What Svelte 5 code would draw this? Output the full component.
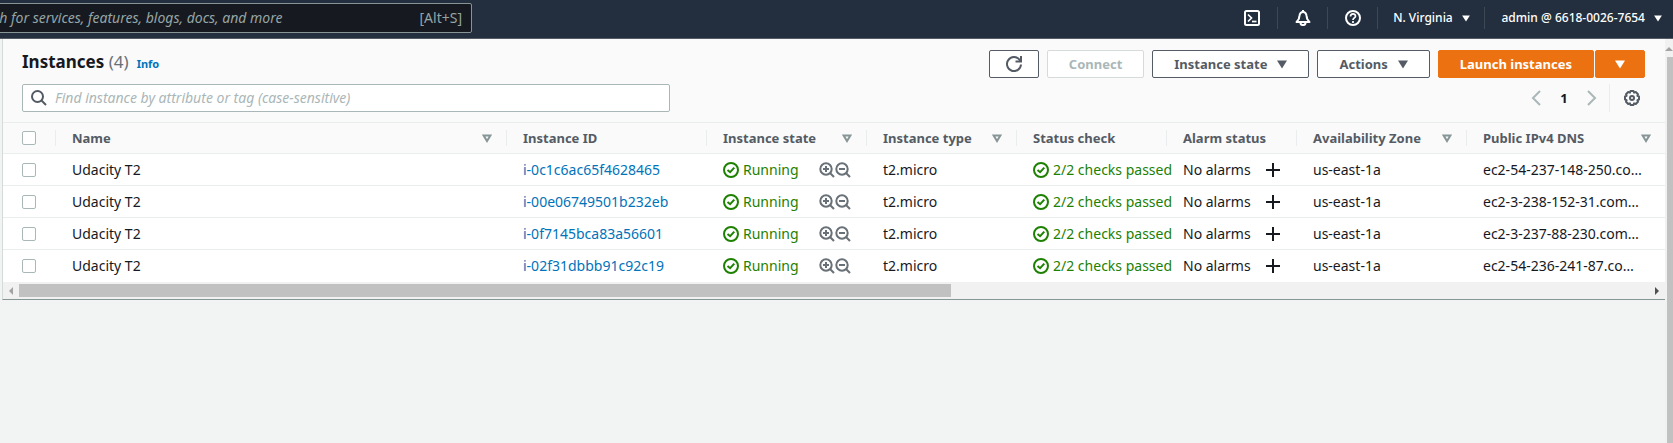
<script>
  const columns = [
    { key: 'name', label: 'Name', filter: true },
    { key: 'id', label: 'Instance ID', filter: false },
    { key: 'state', label: 'Instance state', filter: true },
    { key: 'type', label: 'Instance type', filter: true },
    { key: 'check', label: 'Status check', filter: false },
    { key: 'alarm', label: 'Alarm status', filter: false },
    { key: 'zone', label: 'Availability Zone', filter: true },
    { key: 'dns', label: 'Public IPv4 DNS', filter: true }
  ];

  const instances = [
    { id: 'i-0c1c6ac65f4628465', dns: 'ec2-54-237-148-250.co…' },
    { id: 'i-00e06749501b232eb', dns: 'ec2-3-238-152-31.com…' },
    { id: 'i-0f7145bca83a56601', dns: 'ec2-3-237-88-230.com…' },
    { id: 'i-02f31dbbb91c92c19', dns: 'ec2-54-236-241-87.co…' }
  ];
</script>

{#snippet caret()}
  <svg class="caret" viewBox="0 0 10 9" aria-hidden="true"><path d="M0 .5h10L5 8.5z" fill="currentColor" /></svg>
{/snippet}

{#snippet okIcon()}
  <svg class="ok" viewBox="0 0 16 16" fill="none" stroke="currentColor" stroke-width="2" aria-hidden="true">
    <circle cx="8" cy="8" r="7" />
    <path d="M4.5 8l2.6 2.2L11.3 5.6" />
  </svg>
{/snippet}

{#snippet lens(plus)}
  <svg viewBox="0 0 16 16" fill="none" stroke="currentColor" stroke-width="2" aria-hidden="true">
    <circle cx="7" cy="7" r="5.7" />
    <path d="M11 11l4 4M4 7h6" />
    {#if plus}<path d="M7 4v6" />{/if}
  </svg>
{/snippet}

<div class="page">
  <header class="topbar">
    <div class="global-search">
      <input type="text" aria-label="Search" placeholder="ch for services, features, blogs, docs, and more" />
      <kbd>[Alt+S]</kbd>
    </div>
    <nav>
      <button class="nav-icon" aria-label="CloudShell">
        <svg viewBox="0 0 16 16" fill="none" stroke="currentColor" stroke-width="2">
          <rect x="1" y="1" width="14" height="14" rx="1.5" />
          <path d="M4 4.5L7.5 8 4 11.5" stroke-width="1.7" /><path d="M8 11.5h4.5" stroke-width="1.7" />
        </svg>
      </button>
      <button class="nav-icon" aria-label="Notifications">
        <svg viewBox="0 0 16 16" fill="none" stroke="currentColor" stroke-width="2" stroke-linejoin="round">
          <path d="M8 2C5.500 2 4.700 4 4.400 6L3.800 9 1.500 12h13l-2.300-3-.6-3C11.300 4 10.500 2 8 2z" />
          <path d="M8 0v2M5.500 12.500c0 3.400 5 3.400 5 0" />
        </svg>
      </button>
      <button class="nav-icon" aria-label="Help">
        <svg viewBox="0 0 16 16" fill="none" stroke="currentColor" stroke-width="2">
          <circle cx="8" cy="8" r="7" />
          <path d="M5.500 6.500C5.500 3 10.600 3.200 10.500 6.200 10.400 8 8 7.800 8 10M8 11v2" stroke-width="1.700" />
        </svg>
      </button>
      <button class="nav-text region">N. Virginia {@render caret()}</button>
      <button class="nav-text account">admin @ 6618-0026-7654 {@render caret()}</button>
    </nav>
  </header>

  <div class="body">
    <main>
      <section class="panel">
        <div class="panel-head">
          <div class="title-row">
            <h1>Instances <span>(4)</span></h1>
            <a class="info" href="#info">Info</a>
            <div class="actions">
              <button class="btn icon-only" aria-label="Refresh">
                <svg viewBox="0 0 16 16" fill="none" stroke="currentColor" stroke-width="2">
                  <path d="M15 8.500A7 7 0 1 1 13.400 3.600L14.500 5" /><path d="M15 0v5.500H9.500" />
                </svg>
              </button>
              <button class="btn" disabled>Connect</button>
              <button class="btn">Instance state {@render caret()}</button>
              <button class="btn">Actions {@render caret()}</button>
              <div class="split">
                <button class="btn primary">Launch instances</button>
                <button class="btn primary icon-only" aria-label="More launch options">{@render caret()}</button>
              </div>
            </div>
          </div>
          <div class="filter-row">
            <label class="filter">
              <svg viewBox="0 0 16 16" fill="none" stroke="currentColor" stroke-width="2" aria-hidden="true">
                <circle cx="6.500" cy="6.500" r="5.500" /><path d="M10.500 10.500l4.500 4.500" />
              </svg>
              <input type="text" aria-label="Find instance" placeholder="Find instance by attribute or tag (case-sensitive)" />
            </label>
            <div class="pager">
              <button aria-label="Previous page"><svg viewBox="0 0 16 16" fill="none" stroke="currentColor" stroke-width="2"><path d="M12 1L5 8l7 7" /></svg></button>
              <button class="current">1</button>
              <button aria-label="Next page"><svg viewBox="0 0 16 16" fill="none" stroke="currentColor" stroke-width="2"><path d="M4 1l7 7-7 7" /></svg></button>
              <button class="settings" aria-label="Preferences">
                <svg viewBox="0 0 16 16" fill="none" stroke="currentColor" stroke-width="2">
                  <path d="M6.500 1h3l.6 1.600L11.800 2l2.200 2.200-.6 1.700 1.600.6v3l-1.600.6.6 1.700-2.200 2.200-1.700-.6L9.500 15h-3l-.6-1.600-1.700.6L2 11.800l.6-1.700L1 9.500v-3l1.600-.6L2 4.200 4.200 2l1.700.6z" stroke-linejoin="round" />
                  <circle cx="8" cy="8" r="2" />
                </svg>
              </button>
            </div>
          </div>
        </div>

        <table>
          <colgroup>
            <col class="c-select" />
            {#each columns as c}<col class="c-{c.key}" />{/each}
          </colgroup>
          <thead>
            <tr>
              <th class="select"><input type="checkbox" aria-label="Select all instances" /></th>
              {#each columns as c}
                <th scope="col">
                  <div class="th">
                    <span>{c.label}</span>
                    {#if c.filter}
                      <svg class="sort" viewBox="0 0 10 9" fill="none" stroke="currentColor" stroke-width="2" aria-hidden="true"><path d="M1.600 1.500h6.800L5 7z" /></svg>
                    {/if}
                  </div>
                </th>
              {/each}
            </tr>
          </thead>
          <tbody>
            {#each instances as row}
              <tr>
                <td class="select"><input type="checkbox" aria-label="Select {row.id}" /></td>
                <td>Udacity T2</td>
                <td><a href="#{row.id}">{row.id}</a></td>
                <td>
                  <div class="cell">
                    {@render okIcon()}<span>Running</span>
                    <span class="lenses">
                      <button aria-label="Filter in">{@render lens(true)}</button>
                      <button aria-label="Filter out">{@render lens(false)}</button>
                    </span>
                  </div>
                </td>
                <td>t2.micro</td>
                <td><div class="cell">{@render okIcon()}<span>2/2 checks passed</span></div></td>
                <td>
                  <div class="cell alarm">
                    <span>No alarms</span>
                    <button aria-label="Add alarm">
                      <svg viewBox="0 0 16 16" fill="none" stroke="currentColor" stroke-width="2"><path d="M8 1v14M1 8h14" /></svg>
                    </button>
                  </div>
                </td>
                <td>us-east-1a</td>
                <td>{row.dns}</td>
              </tr>
            {/each}
          </tbody>
        </table>

        <div class="hscroll" aria-hidden="true">
          <svg viewBox="0 0 4 8"><path d="M4 0v8L0 4z" fill="#a3a3a3" /></svg>
          <div class="track"><div class="thumb"></div></div>
          <svg viewBox="0 0 4 8"><path d="M0 0v8l4-4z" fill="#505050" /></svg>
        </div>
      </section>
    </main>
    <div class="vscroll" aria-hidden="true">
      <svg viewBox="0 0 8 4"><path d="M0 4h8L4 0z" fill="#a3a3a3" /></svg>
      <div class="vthumb"></div>
    </div>
  </div>
</div>

<style>
  :global(body) { margin: 0; }
  .page {
    min-height: 100vh;
    display: flex;
    flex-direction: column;
    overflow: hidden;
    background: #f2f3f3;
    color: #16191f;
    font: 14px/20px "Noto Sans", "Open Sans", sans-serif;
  }
  * { box-sizing: border-box; }
  button, input { font: inherit; color: inherit; }
  button { margin: 0; padding: 0; border: 0; background: none; white-space: nowrap; }
  svg { display: block; flex: none; width: 16px; height: 16px; }
  svg.caret { width: 10px; height: 9px; }
  a { color: #0073bb; text-decoration: none; }

  .topbar {
    height: 39px;
    display: flex;
    align-items: center;
    justify-content: space-between;
    padding-bottom: 2px;
    background: #232f3e;
    border-bottom: 1px solid #545b64;
    color: #fff;
  }
  .global-search {
    width: 480px;
    height: 30px;
    margin-left: -8px;
    display: flex;
    align-items: center;
    padding-right: 9px;
    background: #16191f;
    border: 1px solid #879596;
    border-radius: 2px;
    color: #95a5a6;
  }
  .global-search input {
    flex: 1;
    min-width: 0;
    padding: 0;
    border: 0;
    background: none;
  }
  input::placeholder { color: #95a5a6; font-style: italic; opacity: 1; }
  kbd { font: inherit; }
  nav { display: flex; align-items: center; }
  nav button { height: 22px; display: flex; align-items: center; justify-content: center; }
  nav button + button { border-left: 1px solid #3d4855; }
  .nav-icon { width: 50px; }
  .nav-text { gap: 9px; font-size: 12px; font-weight: 500; }
  .region { width: 107px; }
  .account { padding: 0 11px 0 16px; }
  .nav-text svg.caret { width: 8px; height: 7px; }

  .body { flex: 1; display: flex; align-items: stretch; }
  main { flex: 1; min-width: 0; padding-left: 2px; }
  .panel { border-left: 1px solid #d5dbdb; border-bottom: 1px solid #879596; background: #fff; }
  .panel-head { padding: 11px 20px 10px 19px; background: #fafafa; border-bottom: 1px solid #eaeded; }
  .title-row { display: flex; align-items: center; margin-bottom: 6px; }
  h1 { margin: 0; font-size: 17px; line-height: 22px; font-weight: 700; padding-bottom: 4px; }
  h1 span { font-weight: 400; color: #687078; }
  .info { margin-left: 8px; font-size: 11px; font-weight: 700; }
  .actions { margin-left: auto; display: flex; gap: 8px; }
  .split { display: flex; gap: 1px; }
  .btn {
    height: 28px;
    display: flex;
    align-items: center;
    justify-content: center;
    gap: 10px;
    padding: 0 21px;
    border: 1px solid #545b64;
    border-radius: 2px;
    background: #fff;
    color: #545b64;
    font-size: 13px;
    font-weight: 700;
  }
  .btn:disabled { border-color: #d5dbdb; color: #aab7b8; }
  .primary { background: #ec7211; border-color: #ec7211; color: #fff; }
  .icon-only { width: 50px; padding: 0; }

  .filter-row { display: flex; justify-content: space-between; }
  .filter {
    width: 648px;
    height: 28px;
    display: flex;
    align-items: center;
    gap: 8px;
    padding: 0 8px;
    background: #fff;
    border: 1px solid #aab7b8;
    border-radius: 2px;
    color: #545b64;
  }
  .filter input { flex: 1; padding: 0; border: 0; outline: 0; background: none; }
  .filter input::placeholder { color: #aab7b8; }
  .pager { display: flex; align-items: center; color: #aab7b8; }
  .pager button { width: 28px; height: 28px; display: flex; align-items: center; justify-content: center; }
  .pager .current { color: #16191f; font-size: 13px; font-weight: 700; }
  .pager .settings { width: 36px; margin-left: 3px; padding-left: 8px; border-left: 1px solid #eaeded; color: #545b64; }

  table { width: 100%; table-layout: fixed; border-collapse: separate; border-spacing: 0; }
  .c-select { width: 52px; }
  .c-id { width: 200px; }
  .c-state { width: 160px; }
  .c-type, .c-check { width: 150px; }
  .c-alarm { width: 130px; }
  .c-zone { width: 170px; }
  .c-dns { width: 199px; }
  th, td { padding: 0 0 0 17px; text-align: left; white-space: nowrap; }
  th { height: 31px; background: #fafafa; border-bottom: 1px solid #eaeded; color: #545b64; font-size: 13px; font-weight: 700; padding: 0; }
  td { height: 32px; border-bottom: 1px solid #eaeded; }
  tbody tr:last-child td { border-bottom: 0; }
  .th { height: 16px; display: flex; align-items: center; justify-content: space-between; padding: 0 14px 0 16px; border-left: 1px solid #eaeded; }
  svg.sort { width: 10px; height: 9px; color: #879596; }
  th.select, td.select { padding: 0 0 0 19px; }
  input[type="checkbox"] {
    appearance: none;
    display: block;
    width: 14px;
    height: 14px;
    margin: 0;
    border: 1px solid #aab7b8;
    border-radius: 2px;
    background: #fff;
  }
  .cell { display: flex; align-items: center; gap: 4px; color: #1d8102; }
  .lenses { margin-left: auto; display: flex; padding-right: 15px; color: #687078; }
  .alarm { justify-content: space-between; padding-right: 15px; color: #16191f; }

  .hscroll { height: 17px; display: flex; align-items: center; justify-content: space-between; gap: 6px; padding: 0 6px; background: #f1f1f1; }
  .hscroll svg { width: 4px; height: 8px; }
  .track { flex: 1; }
  .thumb { width: 57.2%; height: 13px; background: #c1c1c1; }
  .vscroll { width: 8px; display: flex; flex-direction: column; align-items: flex-end; gap: 6px; padding-top: 8px; background: #f1f1f1; overflow: hidden; }
  .vscroll svg { width: 8px; height: 4px; }
  .vthumb { flex: 1; width: 6px; background: #c1c1c1; }
</style>
